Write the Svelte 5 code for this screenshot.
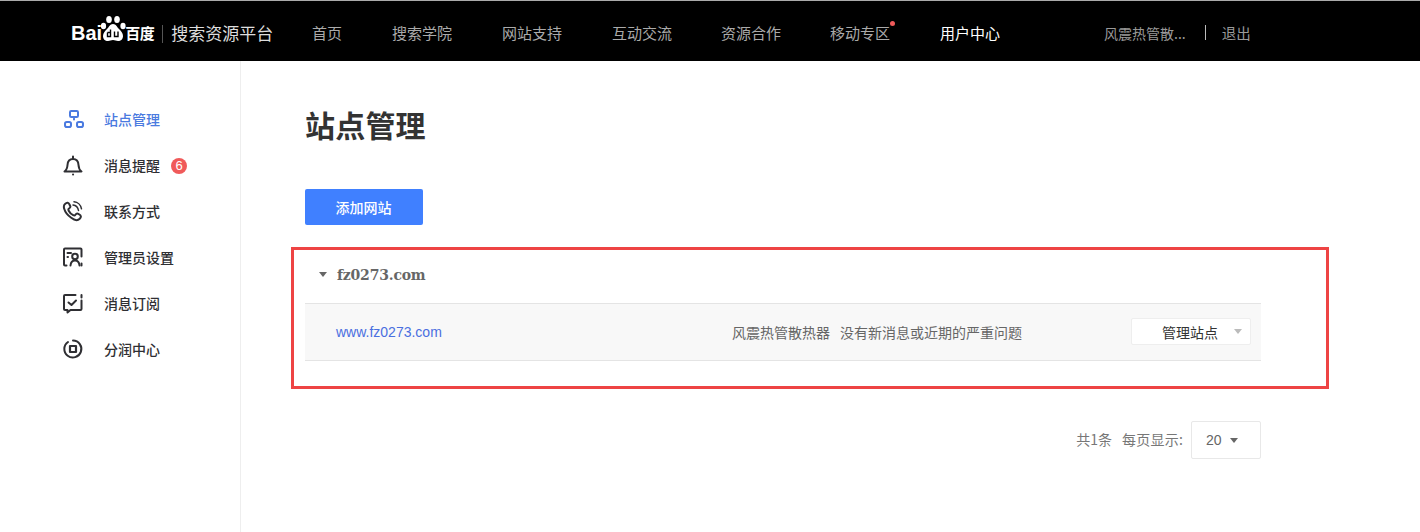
<script>
  const nav = [
    { label: '首页', w: 80 }, { label: '搜索学院', w: 110 }, { label: '网站支持', w: 110 },
    { label: '互动交流', w: 109 }, { label: '资源合作', w: 109 }, { label: '移动专区', w: 110, dot: true },
    { label: '用户中心', w: 60, active: true }
  ];
  const side = [
    { id: 'site', label: '站点管理', active: true },
    { id: 'bell', label: '消息提醒', badge: 6 },
    { id: 'phone', label: '联系方式' },
    { id: 'admin', label: '管理员设置' },
    { id: 'sub', label: '消息订阅' },
    { id: 'share', label: '分润中心' }
  ];
</script>

<div class="page">
  <header class="top">
    <div class="logo">
      <span class="bai">Bai</span>
      <svg class="paw" width="28" height="30" viewBox="0 0 28 30" fill="#fff">
        <ellipse cx="4.5" cy="13" rx="2.6" ry="3.2" />
        <ellipse cx="10" cy="6.5" rx="2.8" ry="3.5" />
        <ellipse cx="18" cy="6.5" rx="2.8" ry="3.5" />
        <ellipse cx="24" cy="13" rx="2.6" ry="3.2" />
        <path d="M14 11c-3 0-4 3-6 5-2 2-4 4-4 7 0 3 2 5 5 5 2 0 3-1 5-1s3 1 5 1c3 0 5-2 5-5 0-3-2-5-4-7-2-2-3-5-6-5z" />
        <path d="M8.5 19.500h3v-3M11.500 19.500v4h-3v-4M15.500 18.500v5h3.500v-5" fill="none" stroke="#000" stroke-width="1.400" />
      </svg>
      <span class="bd">百度</span>
      <i class="sep"></i>
      <span class="plat">搜索资源平台</span>
    </div>
    <nav class="nav">
      {#each nav as n}
        <a class="nav-item" class:active={n.active} style="width:{n.w}px">
          {n.label}{#if n.dot}<i class="dot"></i>{/if}
        </a>
      {/each}
    </nav>
    <div class="user">
      <span>风震热管散...</span>
      <i class="bar"></i>
      <span class="out">退出</span>
    </div>
  </header>

  <div class="body">
    <aside class="side">
      {#each side as s}
        <div class="side-item" class:active={s.active}>
          <svg class="ico" width="24" height="24" viewBox="0 0 24 24" fill="none" stroke="currentColor" stroke-width="2" stroke-linecap="round" stroke-linejoin="round">
            {#if s.id === 'site'}
              <rect x="9" y="4" width="8" height="6" rx="1.200" />
              <rect x="4" y="15" width="6" height="5" rx="1.800" />
              <rect x="16" y="15" width="6" height="5" rx="1.800" />
              <path d="M13 11.500v1" />
            {:else if s.id === 'bell'}
              <path d="M3.500 18.500c2.300-1.500 2.800-3.500 3-6.500.2-3.700 2.200-6 5.500-6s5.300 2.300 5.500 6c.2 3 .7 5 3 6.500z" />
              <path d="M12 3.500v2M12 21.500h.1" />
            {:else if s.id === 'phone'}
              <path d="M4 5c2-2 3.500-1.500 4.500.5l.8 1.700c.3.800 0 1.500-1.300 2.300-.8.500-.8 1.200-.3 2.200 1 2 2.500 3.500 4.500 4.500 1 .5 1.700.4 2.200-.4.800-1.200 1.500-1.500 2.300-1.200l1.500.8c2 1 2.300 2.500.5 4.400-2 2-5 1.700-8.500-1-3.500-2.400-6-5.500-7-9-.6-2-.3-3.800.8-4.800z" />
              <path d="M12 6c2.800.3 5 2.500 5.500 5.500M13 2.800c3.800.3 6.800 3.300 7.500 7" stroke-width="1.500" />
            {:else if s.id === 'admin'}
              <path d="M5.500 20.500H4a1 1 0 0 1-1-1V4.500a1 1 0 0 1 1-1h15.500a1 1 0 0 1 1 1v7M20.500 18.500v2" />
              <path d="M6.500 8h3.500M6.500 12h.5" />
              <circle cx="14" cy="11.500" r="2.800" />
              <path d="M9.500 20.500c.3-3 2-5 4.500-5s4.200 2 4.500 5" />
            {:else if s.id === 'sub'}
              <path d="M14.500 4H4a1 1 0 0 0-1 1v13a1 1 0 0 0 1 1h2.500v2.500l3-2.500H19.500a1 1 0 0 0 1-1V9.500" />
              <path d="M7.500 11.500l3 2.500 4.500-4.500M20.500 4v2.500" />
            {:else}
              <path d="M7 5a8.500 8.500 0 1 0 5-1.500" />
              <rect x="9" y="9" width="6" height="6" stroke-width="2.200" />
            {/if}
          </svg>
          <span class="lab">{s.label}</span>
          {#if s.badge}<span class="badge">{s.badge}</span>{/if}
        </div>
      {/each}
    </aside>

    <main class="main">
      <h1>站点管理</h1>
      <button class="add">添加网站</button>

      <section class="box">
        <div class="group-head"><i class="caret dark"></i><span>fz0273.com</span></div>
        <div class="row">
          <a class="url">www.fz0273.com</a>
          <span class="name">风震热管散热器</span>
          <span class="msg">没有新消息或近期的严重问题</span>
          <div class="manage"><span>管理站点</span><i class="caret light"></i></div>
        </div>
      </section>

      <div class="pager">
        <span class="tot">共1条</span>
        <span class="per">每页显示:</span>
        <div class="size"><span>20</span><i class="caret dark small"></i></div>
      </div>
    </main>
  </div>
</div>

<style>
  :global(body) { margin: 0; background: #fff; }
  .page { width: 1420px; height: 532px; overflow: hidden; font-family: "Noto Sans CJK SC", "Liberation Sans", sans-serif; color: #333; }
  .top { height: 60px; background: #000; border-top: 1px solid #aaa; display: flex; align-items: center; padding-left: 71px; box-sizing: content-box; }
  .logo { display: flex; align-items: center; width: 241px; color: #fff; flex: none; height: 60px; }
  .bai { font: bold 20px "Liberation Sans", sans-serif; margin-top: 5px; }
  .paw { margin: -6px -2px 0 -3px; }
  .bd { font-size: 15px; font-weight: 700; margin-top: 3px; letter-spacing: -0.5px; }
  .sep { width: 1px; height: 18px; background: #555; margin: 5px 8px 0 8px; }
  .plat { font-size: 17px; color: #ddd; margin-top: 3px; white-space: nowrap; }
  .nav { display: flex; height: 60px; align-items: center; }
  .nav-item { position: relative; display: block; font-size: 15px; color: #aaa; white-space: nowrap; margin-top: 3px; flex: none; }
  .nav-item.active { color: #fff; }
  .dot { position: absolute; left: 60px; top: -1px; width: 5px; height: 5px; border-radius: 50%; background: #f05a5a; }
  .user { display: flex; align-items: center; margin-left: 104px; font-size: 14px; color: #999; margin-top: 3px; white-space: nowrap; }
  .bar { width: 1px; height: 15px; background: #bbb; margin: 0 16px 0 19px; }
  .out { font-size: 14.500px; }
  .body { display: flex; height: 471px; }
  .side { width: 240px; border-right: 1px solid #eee; padding-top: 36px; flex: none; }
  .side-item { height: 46px; display: flex; align-items: center; padding-left: 61px; color: #2f2f33; }
  .side-item.active { color: #4a7ae0; }
  .ico { flex: none; margin-top: -2px; }
  .lab { font-size: 14px; font-weight: 500; margin-left: 19px; margin-top: -3px; }
  .badge { margin-left: 11px; width: 16px; height: 16px; border-radius: 50%; background: #f05a5a; color: #fff; font: 13px/16px "Liberation Sans", sans-serif; text-align: center; }
  .main { padding-left: 64px; flex: 1; min-width: 0; }
  h1 { font-size: 30px; font-weight: 700; margin: 41px 0 0; line-height: 44px; color: #333; letter-spacing: 0.2px; }
  .add { display: block; margin-top: 43px; width: 118px; height: 36px; border: 0; border-radius: 2px; background: #4080ff; color: #fff; font: 500 14px "Noto Sans CJK SC", sans-serif; padding: 0 1px 0 0; }
  .box { margin: 22px 0 0 -14px; width: 1021px; height: 136px; border: 3px solid #ee4444; padding-left: 11px; box-sizing: content-box; }
  .group-head { height: 49px; padding-bottom: 4px; display: flex; align-items: center; font: bold 14px "DejaVu Serif", serif; letter-spacing: -0.2px; color: #666; padding-left: 14px; }
  .group-head span { margin-left: 10px; }
  .row { width: 956px; height: 56px; border-top: 1px solid #e4e4e4; border-bottom: 1px solid #e4e4e4; background: #f8f8f8; display: flex; align-items: center; font-size: 14px; color: #666; }
  .url { color: #4a6fe0; font: 14px "Liberation Sans", sans-serif; margin-left: 31px; width: 396px; white-space: nowrap; }
  .name { margin-right: 10px; }
  .manage { margin-left: auto; margin-right: 10px; width: 120px; height: 27px; background: #fff; border: 1px solid #eee; border-radius: 2px; display: flex; align-items: center; color: #333; box-sizing: border-box; padding-left: 30px; font-size: 14px; margin-top: -1px; }
  .caret { display: inline-block; width: 0; height: 0; border-left: 4px solid transparent; border-right: 4px solid transparent; }
  .caret.dark { border-top: 5px solid #666; }
  .caret.light { border-top: 5px solid #bbb; margin-left: 16px; }
  .caret.small { margin-left: 8px; }
  .pager { display: flex; align-items: center; justify-content: flex-end; width: 956px; margin-top: 32px; font-size: 14px; color: #777; }
  .tot, .per { margin-top: -2px; }
  .per { margin-left: 10px; letter-spacing: 0.2px; }
  .size { margin-left: 8px; width: 70px; height: 38px; border: 1px solid #e8e8e8; border-radius: 2px; box-sizing: border-box; display: flex; align-items: center; padding-left: 14px; font: 14px "Liberation Sans", sans-serif; color: #666; }
</style>
